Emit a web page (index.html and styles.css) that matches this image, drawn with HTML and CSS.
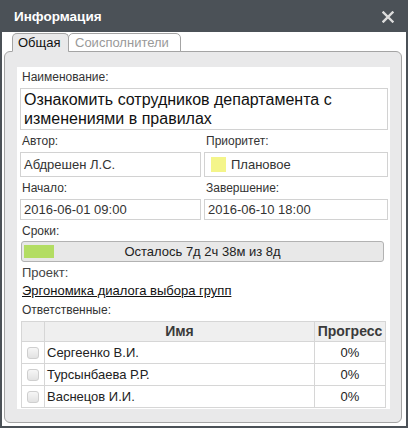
FILE: index.html
```html
<!DOCTYPE html>
<html lang="ru">
<head>
<meta charset="utf-8">
<link rel="stylesheet" href="styles.css">
</head>
<body>
<div class="window">
  <div class="titlebar">
    <span class="title">Информация</span>
    <svg class="close" width="12" height="12" viewBox="0 0 12 12"><path d="M1.5 1.5 L10.5 10.5 M10.5 1.5 L1.5 10.5" stroke="#dcdcdc" stroke-width="2.4" stroke-linecap="square"/></svg>
  </div>
  <div class="tabs">
    <div class="tab active">Общая</div>
    <div class="tab">Соисполнители</div>
  </div>
  <div class="panel">
    <div class="content">
      <div class="lbl first">Наименование:</div>
      <div class="box name">Ознакомить сотрудников департамента с изменениями в правилах</div>
      <div class="grid">
        <div class="cell">
          <div class="lbl">Автор:</div>
          <div class="box tall">Абдрешен Л.С.</div>
        </div>
        <div class="cell">
          <div class="lbl">Приоритет:</div>
          <div class="box tall prio"><span class="swatch"></span>Плановое</div>
        </div>
        <div class="cell">
          <div class="lbl">Начало:</div>
          <div class="box short">2016-06-01 09:00</div>
        </div>
        <div class="cell">
          <div class="lbl">Завершение:</div>
          <div class="box short">2016-06-10 18:00</div>
        </div>
      </div>
      <div class="lbl">Сроки:</div>
      <div class="bar">
        <div class="fill" style="width:30px"></div>
        <div class="bartext">Осталось 7д 2ч 38м из 8д</div>
      </div>
      <div class="lbl big">Проект:</div>
      <a class="link" href="#">Эргономика диалога выбора групп</a>
      <div class="lbl">Ответственные:</div>
      <table class="people">
        <thead>
          <tr><th class="c1"></th><th class="c2">Имя</th><th class="c3">Прогресс</th></tr>
        </thead>
        <tbody>
          <tr><td class="c1"><span class="chk"></span></td><td class="c2">Сергеенко В.И.</td><td class="c3">0%</td></tr>
          <tr><td class="c1"><span class="chk"></span></td><td class="c2">Турсынбаева Р.Р.</td><td class="c3">0%</td></tr>
          <tr><td class="c1"><span class="chk"></span></td><td class="c2">Васнецов И.И.</td><td class="c3">0%</td></tr>
        </tbody>
      </table>
    </div>
  </div>
</div>
</body>
</html>
```
FILE: styles.css
```css
html, body {
  margin: 0;
  padding: 0;
  background: #ffffff;
}
body {
  font-family: "Liberation Sans", Arial, sans-serif;
  color: #333;
}
.window {
  width: 408px;
  height: 428px;
  box-sizing: border-box;
  border: 2px solid #4b5157;
  border-top: 0;
  background: #fff;
  display: flex;
  flex-direction: column;
  padding-bottom: 3px;
}
.titlebar {
  height: 32px;
  margin: 0 -2px;
  background: #4b5157;
  display: flex;
  align-items: center;
  justify-content: space-between;
  padding: 0 14px 0 14px;
  flex-shrink: 0;
}
.title {
  color: #fff;
  font-weight: bold;
  font-size: 13.5px;
  margin-top: 1px;
}
.close {
  display: block;
  margin-top: 1px;
}
.tabs {
  display: flex;
  padding-left: 10px;
  margin-top: 1px;
  height: 18px;
  position: relative;
  z-index: 1;
  flex-shrink: 0;
}
.tab {
  box-sizing: border-box;
  height: 19px;
  border: 1px solid #a4a4a4;
  border-radius: 5px 5px 0 0;
  font-size: 13px;
  line-height: 17px;
  padding: 0 5px;
  background: #fff;
  color: #999;
}
.tab.active {
  background: #e9e9ea;
  color: #111;
  border-bottom-color: #e9e9ea;
  width: 57px;
}
.tab + .tab {
  margin-left: -1px;
  width: 113px;
  padding-left: 6px;
}
.panel {
  flex: 1;
  margin: 0 4px 0 2px;
  border: 1px solid #a4a4a4;
  border-radius: 6px;
  background: #e9e9ea;
  padding: 15px 11px 13px 12px;
  display: flex;
  flex-direction: column;
}
.content {
  flex: 1;
  background: #fff;
  padding: 2px 2px 0 3px;
}
.lbl {
  font-size: 12px;
  height: 16px;
  line-height: 16px;
  margin: 3px 0 3px 2px;
  color: #333;
}
.lbl.first {
  margin-top: 0;
}
.lbl.big {
  font-size: 13px;
  color: #444;
  margin-top: 3px;
  margin-bottom: 2px;
}
.box {
  box-sizing: border-box;
  border: 1px solid #d2d2d2;
  font-size: 13px;
  color: #333;
  padding: 0 3px;
}
.box.name {
  font-size: 16px;
  line-height: 19px;
  height: 42px;
  padding: 1px 3px;
  color: #111;
}
.box.tall {
  height: 25px;
  line-height: 23px;
}
.box.short {
  height: 21px;
  line-height: 19px;
}
.box.prio {
  display: flex;
  align-items: center;
  padding-left: 6px;
}
.swatch {
  width: 15px;
  height: 15px;
  background: #f4f58a;
  margin-right: 5px;
}
.grid {
  display: grid;
  grid-template-columns: 181px 1fr;
  column-gap: 3px;
}
.bar {
  box-sizing: border-box;
  height: 21px;
  margin: -1px 4px 0 1px;
  border: 1px solid #b2b2b2;
  border-radius: 3px;
  background: #e8e8e8;
  padding: 3px 2px;
  position: relative;
}
.fill {
  height: 13px;
  background: #b3dd63;
}
.bartext {
  position: absolute;
  left: 0;
  right: 0;
  top: 0;
  line-height: 19px;
  text-align: center;
  font-size: 13px;
  color: #222;
}
.link {
  display: block;
  font-size: 13px;
  line-height: 16px;
  color: #111;
  text-decoration: underline;
  margin-left: 2px;
}
.people {
  border-collapse: collapse;
  width: 365px;
  margin-left: 1px;
  font-size: 13px;
}
.people th, .people td {
  border: 1px solid #d6d6d6;
  padding: 0;
}
.people th {
  background: #efefef;
  height: 19px;
  font-size: 14px;
  font-weight: bold;
  color: #3a3a3a;
  line-height: 19px;
}
.people td {
  height: 21px;
  color: #222;
}
.people .c1 {
  width: 22px;
  text-align: center;
}
.people .c3 {
  width: 70px;
  text-align: center;
}
.people td.c2 {
  padding-left: 2px;
}
.chk {
  display: block;
  box-sizing: border-box;
  width: 12px;
  height: 12px;
  margin: 0 auto 0 5px;
  border: 1px solid #cfcfcf;
  border-radius: 3px;
  background: linear-gradient(#f6f6f6, #e2e2e2);
}
```
